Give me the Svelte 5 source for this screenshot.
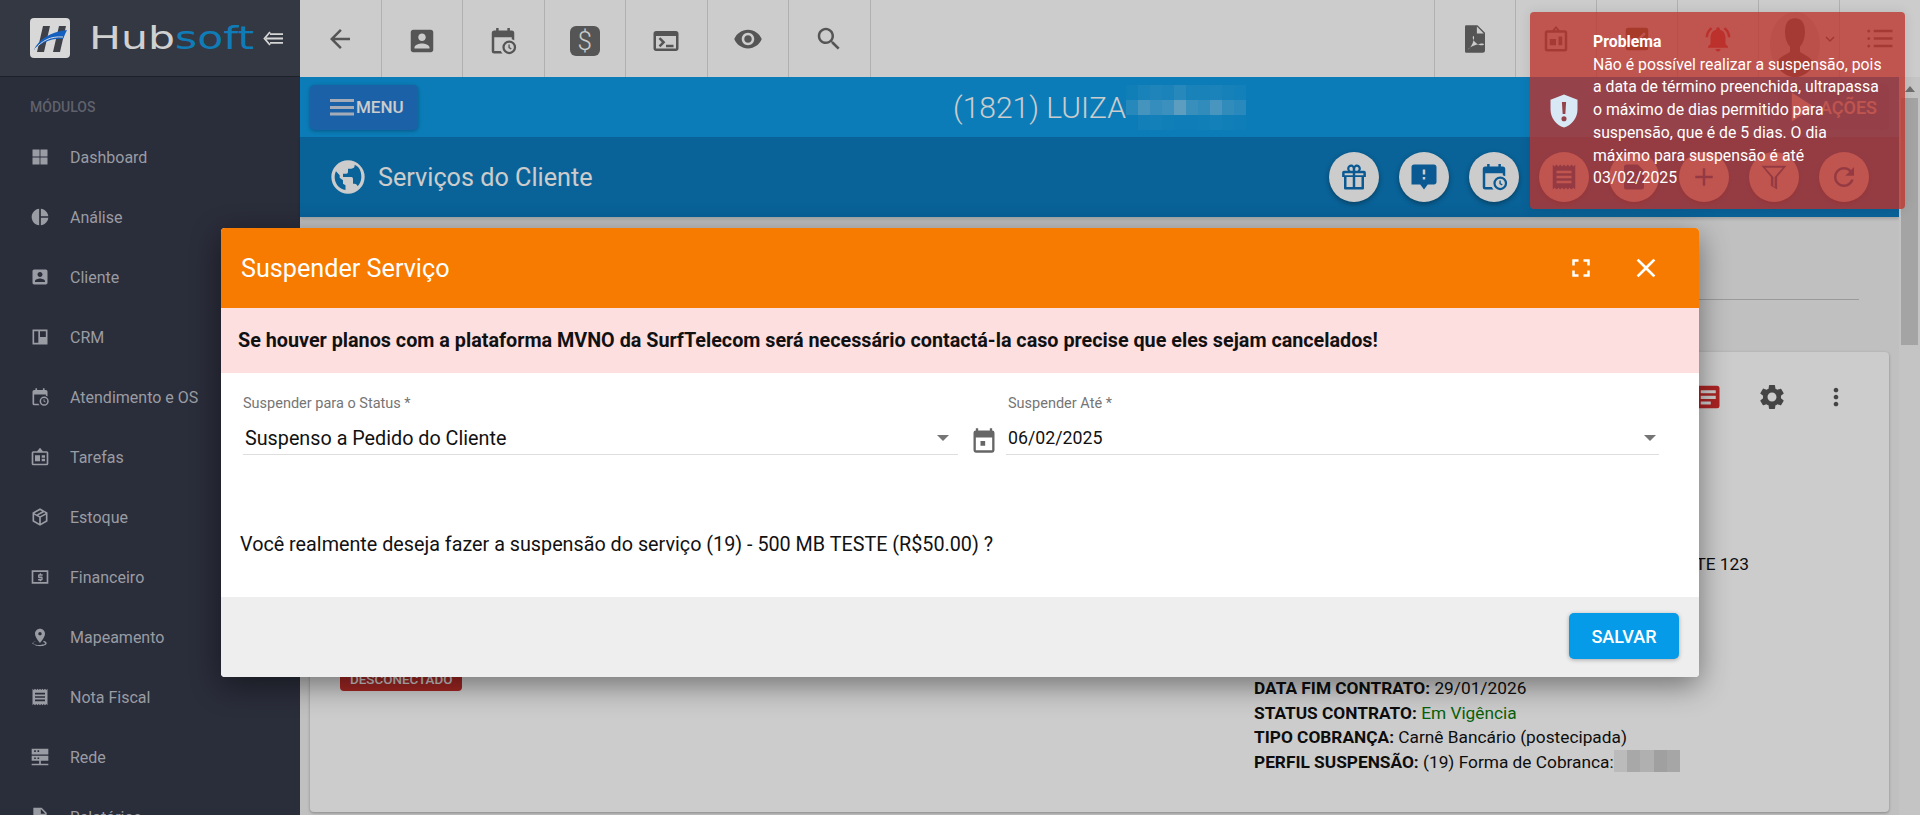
<script>
  const icons = {
    back: "M20 11H7.830l5.590-5.590L12 4l-8 8 8 8 1.410-1.410L7.830 13H20v-2z",
    contact: "M3 5v14c0 1.100.89 2 2 2h14c1.100 0 2-.9 2-2V5c0-1.100-.9-2-2-2H5c-1.110 0-2 .9-2 2zm12 4c0 1.660-1.340 3-3 3s-3-1.340-3-3 1.340-3 3-3 3 1.340 3 3zm-9 8c0-2 4-3.100 6-3.100s6 1.100 6 3.100v1H6v-1z",
    calclock: "M15.500 1.500v2h-7v-2h-2v2H5a2 2 0 0 0-2 2v14.500a2 2 0 0 0 2 2h6.600a7 7 0 0 1-1.400-2H5V9h14v1.500a7 7 0 0 1 2 .9V5.500a2 2 0 0 0-2-2h-1.500v-2zM17 11.500a5.500 5.500 0 1 0 0 11 5.500 5.500 0 0 0 0-11zm0 1.800a3.700 3.700 0 1 1 0 7.400 3.700 3.700 0 0 1 0-7.400zM16.300 14.800v2.700l2 1.200.600-.9-1.500-.9v-2.100z",
    terminal: "M20 4H4c-1.100 0-2 .9-2 2v12c0 1.100.9 2 2 2h16c1.100 0 2-.9 2-2V6c0-1.100-.9-2-2-2zm0 14H4V8h16v10zm-2-1h-6v-2h6v2zM7.500 17l-1.410-1.410L8.670 13l-2.590-2.590L7.500 9l4 4-4 4z",
    eye: "M12 4.500C7 4.500 2.730 7.610 1 12c1.730 4.390 6 7.500 11 7.500s9.270-3.110 11-7.500c-1.730-4.390-6-7.500-11-7.500zM12 17c-2.760 0-5-2.240-5-5s2.240-5 5-5 5 2.240 5 5-2.240 5-5 5zm0-8c-1.660 0-3 1.340-3 3s1.340 3 3 3 3-1.340 3-3-1.340-3-3-3z",
    search: "M15.500 14h-.79l-.28-.27C15.410 12.590 16 11.110 16 9.500 16 5.910 13.090 3 9.500 3S3 5.910 3 9.500 5.910 16 9.500 16c1.610 0 3.090-.59 4.230-1.570l.27.28v.79l5 4.990L20.490 19l-4.990-5zm-6 0C7.010 14 5 11.990 5 9.500S7.010 5 9.500 5 14 7.010 14 9.500 11.990 14 9.500 14z",
    pdf: "M5 1h9l6 6v14a2 2 0 0 1-2 2H5a1 1 0 0 1-1-1V2a1 1 0 0 1 1-1zm8.500 1v5.500H19zM6 20.500c2.500-1.500 4.500-5 5.200-9 .4-2-.8-2.500-1-1-.3 2 3 6.500 7.800 6.500 1.500 0 1.500-1.500 0-1.500-3 0-9 1.800-12 5z",
    board: "M12 1.500 9 5H5a2 2 0 0 0-2 2v13a2 2 0 0 0 2 2h14a2 2 0 0 0 2-2V7a2 2 0 0 0-2-2h-4zm0 2.300L13 5h-2zM5 7h14v13H5zm2 5v5h5v-5zm7-2v7h3v-7z",
    check: "M5 3h14a2 2 0 0 1 2 2v14a2 2 0 0 1-2 2H5a2 2 0 0 1-2-2V5a2 2 0 0 1 2-2zm5 14 9-9-1.400-1.400L10 14.200l-3.600-3.600L5 12z",
    bell: "M7.580 4.080L6.150 2.650C3.750 4.480 2.170 7.300 2.030 10.500h2c.15-2.650 1.510-4.970 3.550-6.420zm12.390 6.420h2c-.15-3.200-1.730-6.020-4.120-7.850l-1.420 1.430c2.020 1.450 3.390 3.770 3.540 6.420zM18 11c0-3.070-1.640-5.640-4.500-6.320V4c0-.83-.67-1.500-1.500-1.500s-1.500.67-1.500 1.500v.68C7.630 5.360 6 7.920 6 11v5l-2 2v1h16v-1l-2-2v-5zm-6 11c.14 0 .27-.01.4-.04.65-.14 1.180-.58 1.440-1.180.1-.24.15-.5.15-.78h-4c.01 1.100.9 2 2.010 2z",
    list: "M1.800 5.500a1.200 1.200 0 1 0 2.400 0 1.200 1.200 0 1 0-2.400 0zM7 4.500h15v2H7zM1.800 11.500a1.200 1.200 0 1 0 2.400 0 1.200 1.200 0 1 0-2.400 0zM7 10.500h15v2H7zM1.800 17.500a1.200 1.200 0 1 0 2.400 0 1.200 1.200 0 1 0-2.400 0zM7 16.500h15v2H7z",
    grid: "M3 3h8.500v8.500H3zM12.500 3H21v8.500h-8.500zM3 12.500h8.500V21H3zM12.500 12.500H21V21h-8.500z",
    pie: "M11 2v20c-5.070-.5-9-4.790-9-10s3.930-9.500 9-10zm2.030 0v8.990H22c-.47-4.740-4.240-8.520-8.970-8.990zm0 11.010V22c4.740-.47 8.500-4.250 8.970-8.990h-8.970z",
    crm: "M3 3h18v18H3zm2 2v14h5V5zm7 0v7h7V5z",
    tasks: "M12 1 8.500 5H4a2 2 0 0 0-2 2v13a2 2 0 0 0 2 2h16a2 2 0 0 0 2-2V7a2 2 0 0 0-2-2h-4.500zM4 7h16v13H4zm2 3v7h6v-7zm8 0v3h4v-3zm0 4v3h4v-3z",
    box: "M12 1.500 3 6.500v11l9 5 9-5v-11zm0 2.300 2.600 1.400L8 9 5.400 7.500zM5 9.200l6 3.500v7L5 16.300zm14 0v7.100l-6 3.400v-7zM17 6.300l1.600 1.200L12 11l-2-1.100z",
    money: "M2 4h20v16H2zm2 2v12h16V6zm9.200 1.500v1.300h2v1.700h-4v1h3c.7 0 1 .4 1 1v2.600c0 .6-.3 1-1 1h-1v1h-1.500v-1h-2v-1.700h4v-1h-3c-.7 0-1-.4-1-1V9.800c0-.6.3-1 1-1h1V7.500z",
    pin: "M18 8c0-3.310-2.690-6-6-6S6 4.690 6 8c0 4.500 6 11 6 11s6-6.500 6-11zm-8 0c0-1.100.9-2 2-2s2 .9 2 2-.89 2-2 2c-1.100 0-2-.9-2-2zM7.500 16.500C5.500 17.200 4 18.200 4 19.500 4 21.500 8 23 12 23s8-1.500 8-3.500c0-1.300-1.500-2.300-3.500-3l-.7 1.400c1.500.5 2.500 1 2.500 1.600 0 1-3.200 2-7.800 2s-7.800-1-7.800-2c0-.6 1-1.100 2.500-1.600z",
    receipt: "M18 17H6v-2h12v2zm0-4H6v-2h12v2zm0-4H6V7h12v2zM3 22l1.500-1.500L6 22l1.500-1.500L9 22l1.500-1.500L12 22l1.500-1.500L15 22l1.500-1.500L18 22l1.500-1.500L21 22V2l-1.500 1.500L18 2l-1.500 1.500L15 2l-1.500 1.500L12 2l-1.500 1.500L9 2 7.500 3.500 6 2 4.500 3.500 3 2v20z",
    network: "M2 2h20v7H2zm3 2v2h2V4zm4 0v2h2V4zM2 10.500h20v6H2zm3 2v2h2v-2zm4 0v2h2v-2zM11 16.500h2V20h9v2H2v-2h9z",
    file: "M4 1h10l6 6v16H4zm9 1.500V8h5.500z",
    gift: "M20 7h-3.200c.5-.5.7-1.100.7-1.700C17.500 3.500 16 2 14.200 2c-1 0-1.700.5-2.200 1.200C11.500 2.500 10.800 2 9.800 2 8 2 6.500 3.500 6.500 5.300c0 .6.2 1.200.7 1.700H4a1.500 1.500 0 0 0-1.500 1.500V12H4v9a1 1 0 0 0 1 1h14a1 1 0 0 0 1-1v-9h1.500V8.500A1.500 1.500 0 0 0 20 7zm-5.800-3.200c.8 0 1.500.7 1.500 1.500S15 7 14.200 7H13V5.300c0-.8.5-1.500 1.200-1.500zm-4.400 0c.7 0 1.200.7 1.200 1.500V7H9.800c-.8 0-1.500-.8-1.500-1.700s.7-1.500 1.500-1.500zM4.500 9H11v1.500H4.500zM6 12h5v8H6zm7 8v-8h5v8zm0-9.500V9h6.500v1.500z",
    alert: "M20 2H4c-1.100 0-1.990.9-1.990 2L2 18h7l3 4 3-4h5c1.100 0 2-.9 2-2V4c0-1.100-.9-2-2-2zm-7 12h-2v-2h2v2zm0-4h-2V6h2v4z",
    note: "M6 2h9l5 5v13a2 2 0 0 1-2 2H6a2 2 0 0 1-2-2V4a2 2 0 0 1 2-2z",
    add: "M19 13h-6v6h-2v-6H5v-2h6V5h2v6h6v2z",
    filter: "M2 3h20l-7.500 9v10l-5-3v-7zm3 1.500 6.500 7.500v7.300l1 .6V12L19 4.500z",
    refresh: "M17.650 6.350C16.200 4.900 14.210 4 12 4c-4.420 0-7.990 3.580-7.990 8s3.570 8 7.990 8c3.730 0 6.840-2.550 7.730-6h-2.080c-.82 2.330-3.040 4-5.650 4-3.310 0-6-2.690-6-6s2.690-6 6-6c1.660 0 3.140.69 4.220 1.780L13 11h7V4l-2.350 2.350z",
    globe: "M12 2a10 10 0 1 0 0 20 10 10 0 0 0 0-20zM4 12c0-1.200.3-2.400.8-3.400L7 11v1.500L9 14v2l1.500 1v2.800C6.700 19.300 4 16 4 12zm13.800 5.600c-.3-.9-1-1.600-1.800-1.600h-1v-3a1 1 0 0 0-1-1H9v-2h2a1 1 0 0 0 1-1V7h2a2 2 0 0 0 2-2v-.4c2.900 1.200 4 4.100 4 7.400 0 2.100-.8 4.100-2.200 5.600z",
    settings: "M19.140 12.940c.04-.3.06-.61.06-.94 0-.32-.02-.64-.07-.94l2.030-1.580c.18-.14.23-.41.12-.61l-1.920-3.320c-.12-.22-.37-.29-.59-.22l-2.390.96c-.5-.38-1.030-.7-1.620-.94l-.36-2.540c-.04-.24-.24-.41-.48-.41h-3.840c-.24 0-.43.17-.47.41l-.36 2.540c-.59.24-1.130.57-1.620.94l-2.390-.96c-.22-.08-.47 0-.59.22L2.740 8.870c-.12.21-.08.47.12.61l2.030 1.580c-.05.3-.09.63-.09.94s.02.64.07.94l-2.030 1.580c-.18.14-.23.41-.12.61l1.920 3.320c.12.22.37.29.59.22l2.390-.96c.5.38 1.030.7 1.620.94l.36 2.540c.05.24.24.41.48.41h3.840c.24 0 .44-.17.47-.41l.36-2.540c.59-.24 1.130-.56 1.620-.94l2.390.96c.22.08.47 0 .59-.22l1.920-3.320c.12-.22.07-.47-.12-.61l-2.010-1.580zM12 15.600c-1.980 0-3.600-1.620-3.600-3.600s1.620-3.600 3.600-3.600 3.600 1.620 3.600 3.600-1.620 3.600-3.600 3.600z",
    more: "M12 8c1.100 0 2-.9 2-2s-.9-2-2-2-2 .9-2 2 .9 2 2 2zm0 2c-1.100 0-2 .9-2 2s.9 2 2 2 2-.9 2-2-.9-2-2-2zm0 6c-1.100 0-2 .9-2 2s.9 2 2 2 2-.9 2-2-.9-2-2-2z",
    doclines: "M4 3h16a2 2 0 0 1 2 2v14a2 2 0 0 1-2 2H4a2 2 0 0 1-2-2V5a2 2 0 0 1 2-2zm3 3.500v2.500h12V6.500zm0 4.500v2.500h12V11zm0 4.500V18h8v-2.500z",
    close: "M19 6.410L17.590 5 12 10.590 6.410 5 5 6.410 10.590 12 5 17.590 6.410 19 12 13.410 17.590 19 19 17.590 13.410 12z",
    fullscreen: "M7 14H5v5h5v-2H7v-3zm-2-4h2V7h3V5H5v5zm12 7h-3v2h5v-5h-2v3zM14 5v2h3v3h2V5h-5z",
    event: "M17 1v2H7V1H5v2a2 2 0 0 0-2 2v15a2 2 0 0 0 2 2h14a2 2 0 0 0 2-2V5a2 2 0 0 0-2-2V1zM5 9h14v11H5zm4 3v4h4v-4z",
    shield: "M12 1 3 4.500v6.500c0 5.500 3.800 10.500 9 12 5.200-1.500 9-6.500 9-12V4.500zm-1.400 5h2.800l-.5 8h-1.800zM12 15.500a1.700 1.700 0 1 1 0 3.400 1.700 1.700 0 0 1 0-3.400z"
  };

  const leftTools = ["back", "contact", "calclock", "dollar", "terminal", "eye", "search"];
  const lowTools = ["contact", "calclock", "dollar", "terminal"];
  const rightTools = ["pdf", "board", "check", "bell", "avatar", "list"];

  const menu = [
    ["Dashboard", "grid"],
    ["Análise", "pie"],
    ["Cliente", "contact"],
    ["CRM", "crm"],
    ["Atendimento e OS", "calclock"],
    ["Tarefas", "tasks"],
    ["Estoque", "box"],
    ["Financeiro", "money"],
    ["Mapeamento", "pin"],
    ["Nota Fiscal", "receipt"],
    ["Rede", "network"],
    ["Relatórios", "file"]
  ];

  const rounds = ["gift", "alert", "calclock", "receipt", "note", "add", "filter", "refresh"];

  // pixelated areas: lightness of every mosaic cell
  const titleMosaic = [
    0.03, 0.08, 0.1, 0.09, 0.14, 0.08, 0.07, 0.09, 0.06, 0.05,
    0.14, 0.3, 0.22, 0.25, 0.42, 0.24, 0.2, 0.32, 0.2, 0.16,
    0, 0.04, 0.05, 0.03, 0.02, 0.02, 0.03, 0.05, 0.03, 0.02
  ];
  const perfilMosaic = ["#eaeaea", "#d2d2d2", "#dcdcdc", "#c8c8c8", "#d0d0d0"];
</script>

<div class="page">
  <aside class="sidebar">
    <div class="brand">
      <div class="logo">
        <svg viewBox="0 0 40 40" width="40" height="40">
          <rect width="40" height="40" rx="4" fill="#d8d8d8" />
          <path d="M7 34 13 8h7l-6 26zM23 34l6-26h7l-6 26z" fill="#3f4148" />
          <path d="M4 32C8 22 20 14 37 12c-2 4-3 7-4 9-12-1-20 3-29 11z" fill="#1360c0" />
          <path d="M5 31c7-8 15-13 28-12" fill="none" stroke="#d8d8d8" stroke-width="1" />
        </svg>
      </div>
      <div class="wordmark-box"><span class="wordmark">Hub<b>soft</b></span></div>
      <svg class="collapse" viewBox="0 0 20 15" width="20" height="15">
        <path d="M7 1 1.500 7.500 7 14M7 3.200h13M3 7.500h17M7 11.800h13" fill="none" stroke="#d5d5d5" stroke-width="1.800" />
      </svg>
    </div>
    <div class="modules">MÓDULOS</div>
    <nav>
      {#each menu as [label, icon]}
        <div class="nav-item">
          <svg viewBox="0 0 24 24" width="20" height="20"><path d={icons[icon]} fill-rule="evenodd" /></svg>
          <span>{label}</span>
        </div>
      {/each}
    </nav>
  </aside>

  <div class="main">
    <header class="toolbar">
      <div class="tools">
        {#each leftTools as tool}
          <div class="tool" class:low={lowTools.includes(tool)}>
            {#if tool === "dollar"}
              <span class="dollar">$</span>
            {:else}
              <svg viewBox="0 0 24 24" width="30" height="30"><path d={icons[tool]} fill-rule="evenodd" /></svg>
            {/if}
          </div>
        {/each}
      </div>
      <div class="tools">
        {#each rightTools as tool}
          <div class="tool right">
            {#if tool === "avatar"}
              <div class="avatar">
                <svg viewBox="0 0 50 62" width="50" height="65" preserveAspectRatio="none">
                  <ellipse cx="25" cy="31" rx="25" ry="31" fill="#e4e4e4" />
                  <path d="M25 6c7 0 10 5 10 13 0 6-2 11-5 14v5c4 3 12 5 14 12-5 8-12 12-19 12S11 58 6 50c2-7 10-9 14-12v-5c-3-3-5-8-5-14 0-8 3-13 10-13z" fill="#6b6b6b" />
                  <circle cx="26" cy="51" r="6" fill="#7d8a3a" />
                </svg>
                <svg class="chev" viewBox="0 0 12 12" width="12" height="12">
                  <path d="m2 4 4 4 4-4" fill="none" stroke="#5a5a5a" stroke-width="1.500" />
                </svg>
              </div>
            {:else}
              <svg class={tool} viewBox="0 0 24 24" width="30" height="30"><path d={icons[tool]} fill-rule="evenodd" /></svg>
            {/if}
          </div>
        {/each}
      </div>
    </header>

    <div class="body">
      <div class="scroller">
        <div class="client-bar">
          <div class="bar-left">
            <button class="menu-btn">
              <svg viewBox="0 0 24 18" width="24" height="18"><path d="M0 1h24v3H0zM0 8h24v3H0zM0 14.500h24v3H0z" fill="#cfd8e6" /></svg>
              MENU
            </button>
          </div>
          <div class="client-name">
            (1821) LUIZA
            <div class="mosaic title-mosaic">
              {#each titleMosaic as a}
                <i style="background: rgba(255, 255, 255, {a})"></i>
              {/each}
            </div>
          </div>
          <div class="bar-right">
            <div class="actions">
              <svg viewBox="0 0 16 20" width="26" height="32"><path d="M1 1v18l14-9z" fill="#fff" /></svg>
              AÇÕES
            </div>
          </div>
        </div>

        <div class="title-bar">
          <div class="title-left">
            <svg viewBox="0 0 24 24" width="40" height="40"><path d={icons.globe} fill-rule="evenodd" /></svg>
            <h1>Serviços do Cliente</h1>
          </div>
          <div class="rounds">
            {#each rounds as r}
              <div class="round">
                <svg viewBox="0 0 24 24" width="30" height="30"><path d={icons[r]} fill-rule="evenodd" /></svg>
              </div>
            {/each}
          </div>
        </div>

        <div class="content">
          <div class="tabs"></div>
          <section class="card">
            <div class="card-head">
              <svg class="red" viewBox="0 0 24 24" width="30" height="30"><path d={icons.doclines} fill-rule="evenodd" /></svg>
              <svg viewBox="0 0 24 24" width="30" height="30"><path d={icons.settings} fill-rule="evenodd" /></svg>
              <svg viewBox="0 0 24 24" width="28" height="28"><path d={icons.more} /></svg>
            </div>
            <div class="card-body">
              <div class="status"><span class="badge">DESCONECTADO</span></div>
              <div class="info">
                <div class="desc">TESTE 123</div>
                <div><b>DATA FIM CONTRATO:</b> 29/01/2026</div>
                <div><b>STATUS CONTRATO:</b> <span class="ok">Em Vigência</span></div>
                <div><b>TIPO COBRANÇA:</b> Carnê Bancário (postecipada)</div>
                <div class="perfil">
                  <span><b>PERFIL SUSPENSÃO:</b> (19) Forma de Cobranca:</span>
                  <span class="mosaic perfil-mosaic">
                    {#each perfilMosaic as c}
                      <i style="background: {c}"></i>
                    {/each}
                  </span>
                </div>
              </div>
            </div>
          </section>
        </div>
      </div>
      <div class="scrollbar">
        <div class="arrow"></div>
        <div class="thumb"></div>
      </div>
    </div>
  </div>

  <div class="backdrop"></div>

  <div class="dialog">
    <div class="dialog-head">
      <h2>Suspender Serviço</h2>
      <div class="dialog-actions">
        <svg viewBox="0 0 24 24" width="30" height="30"><path d={icons.fullscreen} /></svg>
        <svg viewBox="0 0 24 24" width="32" height="32"><path d={icons.close} /></svg>
      </div>
    </div>
    <div class="dialog-warning">Se houver planos com a plataforma MVNO da SurfTelecom será necessário contactá-la caso precise que eles sejam cancelados!</div>
    <div class="dialog-body">
      <div class="fields">
        <div class="field status-field">
          <label>Suspender para o Status *</label>
          <div class="select"><span class="big">Suspenso a Pedido do Cliente</span><i class="caret"></i></div>
        </div>
        <svg class="cal" viewBox="0 0 24 24" width="28" height="28"><path d={icons.event} fill-rule="evenodd" /></svg>
        <div class="field date-field">
          <label>Suspender Até *</label>
          <div class="select"><span>06/02/2025</span><i class="caret"></i></div>
        </div>
      </div>
      <p class="question">Você realmente deseja fazer a suspensão do serviço (19) - 500 MB TESTE (R$50.00) ?</p>
    </div>
    <div class="dialog-foot">
      <button class="save">SALVAR</button>
    </div>
  </div>

  <div class="toast">
    <svg class="toast-icon" viewBox="0 0 24 24" width="36" height="36"><path d={icons.shield} fill-rule="evenodd" /></svg>
    <div class="toast-text">
      <strong>Problema</strong>
      <div>Não é possível realizar a suspensão, pois a data de término preenchida, ultrapassa o máximo de dias permitido para suspensão, que é de 5 dias. O dia<br />máximo para suspensão é até<br />03/02/2025</div>
    </div>
  </div>
</div>

<style>
  :global(body) {
    margin: 0;
    overflow: hidden;
  }

  .page {
    position: relative;
    display: flex;
    width: 1920px;
    height: 815px;
    overflow: hidden;
    background: #f0f0f0;
    font-family: Roboto, "Liberation Sans", sans-serif;
    color: #111;
  }

  .sidebar {
    flex: 0 0 300px;
    background: #2a2d3a;
    overflow: hidden;
  }

  .brand {
    display: flex;
    align-items: center;
    height: 77px;
    padding-left: 30px;
    box-sizing: border-box;
    background: #343842;
    border-bottom: 1px solid #1f2129;
  }

  .logo {
    height: 40px;
    margin-right: 19px;
  }

  .wordmark-box {
    width: 164px;
    white-space: nowrap;
  }

  .wordmark {
    display: inline-block;
    transform: scaleX(1.33);
    transform-origin: left center;
    font-family: "DejaVu Sans", sans-serif;
    font-size: 32px;
    color: #d0d0d0;
  }

  .wordmark b {
    font-weight: 400;
    color: #0f7cb8;
  }

  .collapse {
    margin-left: 10px;
  }

  .modules {
    padding: 21px 0 0 30px;
    font-size: 14px;
    font-weight: 500;
    line-height: 18px;
    color: #5f626c;
  }

  nav {
    padding-top: 11px;
  }

  .nav-item {
    display: flex;
    align-items: center;
    gap: 20px;
    height: 60px;
    padding-left: 30px;
    font-size: 16px;
    color: #9a9ca3;
  }

  .nav-item svg {
    fill: #9a9ca3;
  }

  .main {
    flex: 1;
    display: flex;
    flex-direction: column;
    min-width: 0;
  }

  .toolbar {
    flex: 0 0 77px;
    display: flex;
    justify-content: space-between;
    background: #fff;
  }

  .tools {
    display: flex;
  }

  .tool {
    display: flex;
    align-items: center;
    justify-content: center;
    width: 81.500px;
    box-sizing: border-box;
    border-right: 1px solid #dcdcdc;
  }

  .tool.low {
    padding-top: 4px;
  }

  .tool.right {
    width: 81px;
    border-right: none;
    border-left: 1px solid #dcdcdc;
  }

  .tool svg {
    fill: #6b6b6b;
  }

  .tool svg.bell {
    fill: #e83a3a;
  }

  .tool svg.check {
    fill: #78702c;
  }

  .dollar {
    display: flex;
    align-items: center;
    justify-content: center;
    width: 30px;
    height: 30px;
    border-radius: 6px;
    background: #6b6b6b;
    color: #fff;
    font-size: 26px;
    font-weight: 300;
  }

  .avatar {
    position: relative;
    display: flex;
    align-self: flex-end;
    height: 65px;
    margin-left: -8px;
  }

  .avatar .chev {
    position: absolute;
    left: 54px;
    top: 21px;
  }

  .body {
    flex: 1;
    display: flex;
    min-height: 0;
  }

  .scroller {
    flex: 1;
    min-width: 0;
  }

  .client-bar {
    display: grid;
    grid-template-columns: 1fr auto 1fr;
    align-items: center;
    height: 60px;
    padding: 0 10px;
    background: #0e9ce7;
  }

  .menu-btn {
    display: flex;
    align-items: center;
    gap: 2px;
    height: 45px;
    padding: 0 14px 0 20px;
    border: none;
    border-radius: 5px;
    background: #227ad3;
    box-shadow: 0 1px 4px rgba(0, 0, 0, 0.3);
    font: 500 17px Roboto, sans-serif;
    color: #fff;
  }

  .client-name {
    display: flex;
    align-items: center;
    font-size: 30px;
    font-weight: 300;
    color: #fff;
  }

  .mosaic {
    display: grid;
  }

  .title-mosaic {
    grid-template-columns: repeat(10, 12px);
    grid-auto-rows: 15px;
  }

  .bar-right {
    display: flex;
    justify-content: flex-end;
  }

  .actions {
    display: flex;
    align-items: center;
    gap: 4px;
    height: 46px;
    padding: 0 12px;
    border-radius: 4px;
    background: rgba(0, 0, 0, 0.06);
    font-size: 18px;
    font-weight: 500;
    color: #fff;
  }

  .title-bar {
    display: flex;
    align-items: center;
    justify-content: space-between;
    height: 80px;
    padding: 0 30px 0 28px;
    background: #0c7bbe;
    box-shadow: 0 2px 3px rgba(0, 0, 0, 0.15);
  }

  .title-left {
    display: flex;
    align-items: center;
    gap: 10px;
  }

  .title-left svg {
    fill: #fff;
  }

  h1 {
    margin: 0;
    font-size: 25.200px;
    font-weight: 400;
    color: #fff;
  }

  .rounds {
    display: flex;
    gap: 20px;
  }

  .round {
    display: flex;
    align-items: center;
    justify-content: center;
    width: 50px;
    height: 50px;
    border-radius: 50%;
    background: #fff;
    box-shadow: 0 2px 5px rgba(0, 0, 0, 0.35);
  }

  .round svg {
    fill: #0d70b8;
  }

  .content {
    padding: 0 10px;
  }

  .tabs {
    height: 82px;
    margin-right: 30px;
    border-bottom: 1px solid #c2c2c2;
  }

  .card {
    height: 460px;
    margin-top: 52px;
    box-sizing: border-box;
    padding: 20px 39px 0 32px;
    border-radius: 4px;
    background: #fff;
    box-shadow: 0 1px 3px rgba(0, 0, 0, 0.3);
  }

  .card-head {
    display: flex;
    justify-content: flex-end;
    align-items: center;
    gap: 35px;
    height: 50px;
  }

  .card-head svg {
    fill: #555;
  }

  .card-head svg.red {
    fill: #d62c2c;
  }

  .card-body {
    display: flex;
    justify-content: space-between;
  }

  .status {
    padding-top: 247px;
  }

  .badge {
    display: block;
    height: 22px;
    margin-left: -2px;
    padding: 0 10px;
    border-radius: 4px;
    background: #c9302c;
    color: #fff;
    font-size: 13.400px;
    font-weight: 500;
    line-height: 22px;
  }

  .info {
    width: 596px;
    padding-top: 130px;
    font-size: 17.300px;
    line-height: 24.400px;
  }

  .info b {
    font-weight: 700;
  }

  .desc {
    margin-bottom: 100px;
    padding-left: 411px;
  }

  .ok {
    color: #0b7a0b;
  }

  .perfil {
    display: flex;
  }

  .perfil-mosaic {
    grid-template-columns: repeat(5, 13.300px);
    height: 22px;
  }

  .scrollbar {
    flex: 0 0 21px;
    background: #f6f6f6;
  }

  .arrow {
    width: 0;
    margin: 9px auto 6px;
    border: 5px solid transparent;
    border-top: none;
    border-bottom: 6px solid #8a8a8a;
  }

  .thumb {
    width: 17px;
    height: 247px;
    margin-left: 2px;
    background: #cecece;
  }

  .backdrop {
    position: absolute;
    inset: 0 0 0 300px;
    background: rgba(0, 0, 0, 0.2);
  }

  .dialog {
    position: absolute;
    left: 221px;
    top: 228px;
    display: flex;
    flex-direction: column;
    width: 1478px;
    height: 449px;
    overflow: hidden;
    border-radius: 4px;
    background: #fff;
    box-shadow: 0 8px 30px rgba(0, 0, 0, 0.45);
  }

  .dialog-head {
    flex: 0 0 80px;
    display: flex;
    align-items: center;
    justify-content: space-between;
    padding: 0 37px 0 20px;
    background: #f77b00;
  }

  h2 {
    margin: 0;
    font-size: 25.200px;
    font-weight: 400;
    color: #fff;
  }

  .dialog-actions {
    display: flex;
    align-items: center;
    gap: 34px;
    fill: #fff;
  }

  .dialog-warning {
    flex: 0 0 65px;
    padding: 0 17px;
    background: #fddfe0;
    font-size: 19.750px;
    font-weight: 700;
    line-height: 65px;
  }

  .dialog-body {
    flex: 1;
    padding: 22px 0 0 22px;
  }

  .fields {
    display: flex;
    align-items: flex-end;
  }

  .field label {
    display: block;
    font-size: 14.500px;
    line-height: 18px;
    color: #757575;
  }

  .date-field label {
    padding-left: 2px;
  }

  .select {
    display: flex;
    align-items: center;
    justify-content: space-between;
    box-sizing: content-box;
    height: 32px;
    padding-top: 9px;
    border-bottom: 1px solid #dedede;
    font-size: 17.750px;
  }

  .select .big {
    padding-left: 2px;
    font-size: 19.750px;
  }

  .status-field {
    width: 715px;
  }

  .date-field {
    width: 653px;
  }

  .date-field .select span {
    padding-left: 2px;
  }

  .cal {
    margin: 0 8px 0 12px;
    fill: #666;
  }

  .caret {
    width: 0;
    margin-right: 9px;
    border: 6px solid transparent;
    border-bottom: none;
    border-top: 6px solid #757575;
  }

  .date-field .caret {
    margin-right: 3px;
  }

  .question {
    margin: 78px 0 0 -3px;
    font-size: 19.750px;
    line-height: 24px;
  }

  .dialog-foot {
    flex: 0 0 80px;
    display: flex;
    align-items: flex-start;
    justify-content: flex-end;
    padding: 16px 20px 0 0;
    box-sizing: border-box;
    background: #eee;
  }

  .save {
    width: 110px;
    height: 46px;
    border: none;
    border-radius: 5px;
    background: #059be8;
    box-shadow: 0 1px 4px rgba(0, 0, 0, 0.3);
    font: 500 18px Roboto, sans-serif;
    color: #fff;
  }

  .toast {
    position: absolute;
    left: 1530px;
    top: 12px;
    display: flex;
    align-items: center;
    width: 375px;
    height: 197px;
    box-sizing: border-box;
    padding-left: 16px;
    border-radius: 4px;
    background: rgba(188, 50, 44, 0.78);
    box-shadow: 0 0 12px rgba(0, 0, 0, 0.1);
    color: #fff;
    font-size: 15.800px;
    line-height: 22.700px;
  }

  .toast-icon {
    flex: none;
    fill: #d8e8f5;
  }

  .toast-text {
    width: 296px;
    margin-left: 11px;
  }

  .toast-text strong {
    font-weight: 700;
  }
</style>
